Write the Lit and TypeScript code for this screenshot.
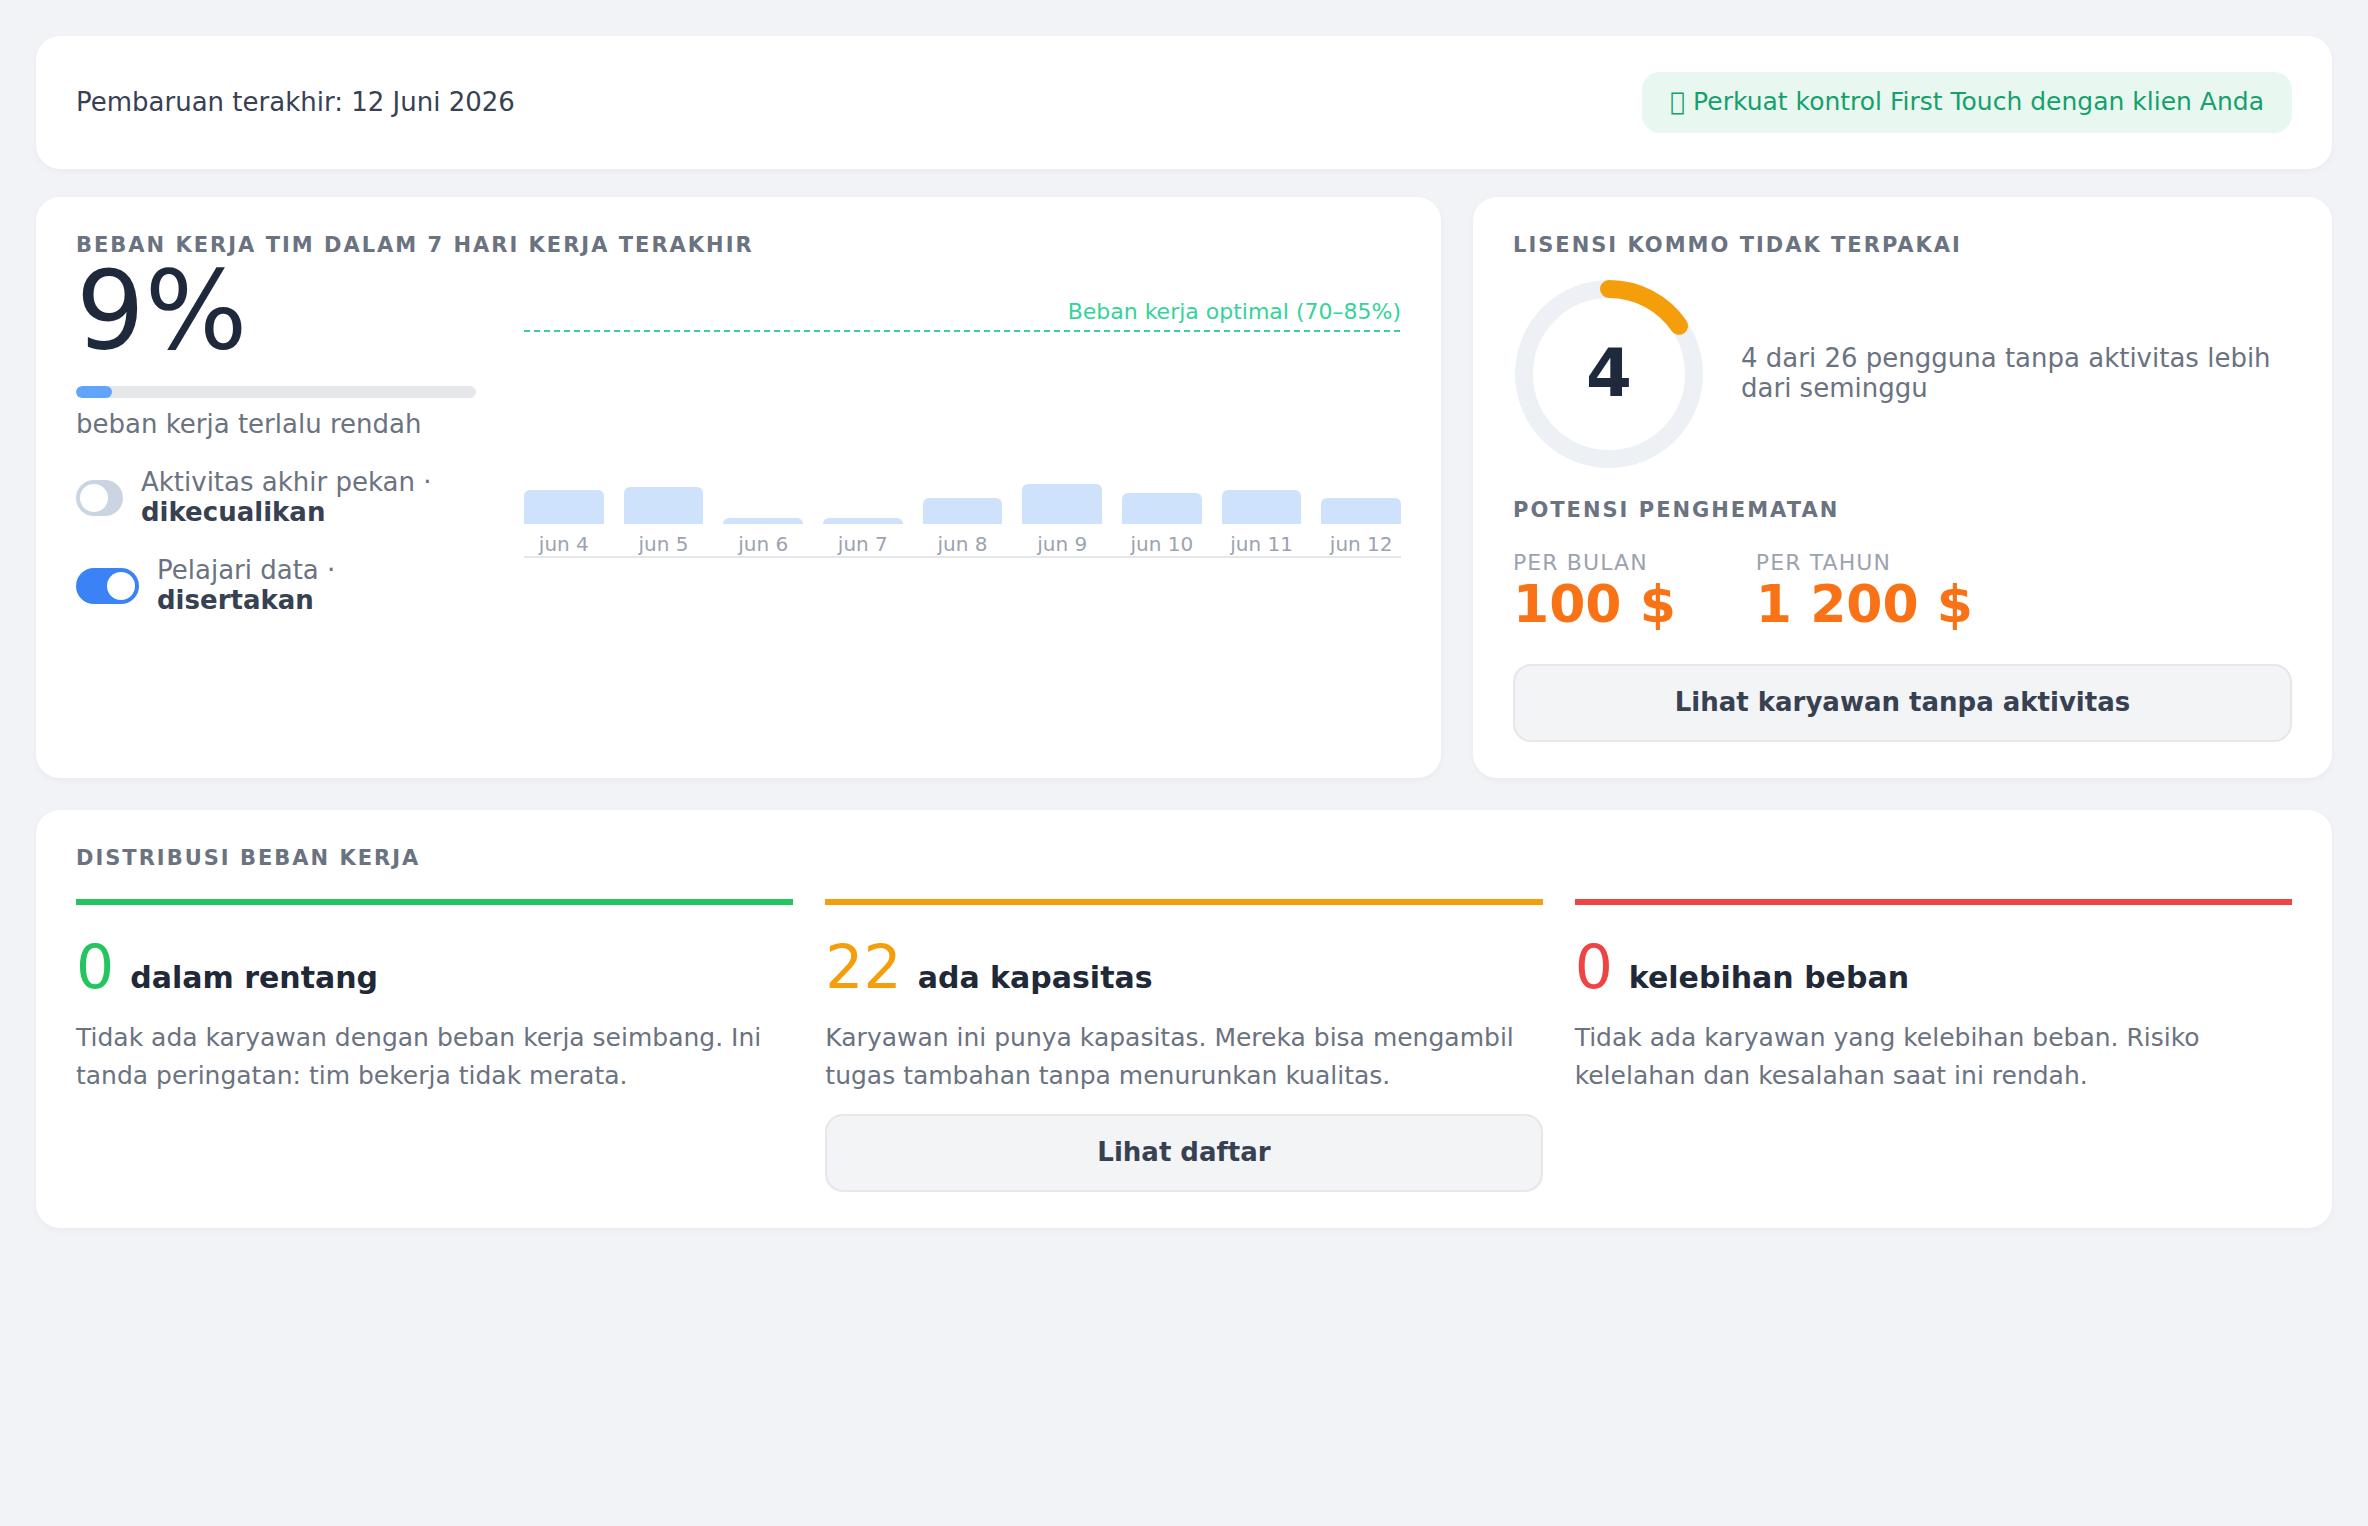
import {LitElement, html, css} from 'lit';
import {customElement} from 'lit/decorators.js';

const BARS = [
  {label: 'jun 4', h: 34},
  {label: 'jun 5', h: 37},
  {label: 'jun 6', h: 6},
  {label: 'jun 7', h: 6},
  {label: 'jun 8', h: 26},
  {label: 'jun 9', h: 40},
  {label: 'jun 10', h: 31},
  {label: 'jun 11', h: 34},
  {label: 'jun 12', h: 26},
];

const BUCKETS = [
  {
    n: '0',
    label: 'dalam rentang',
    color: '#22c55e',
    text: 'Tidak ada karyawan dengan beban kerja seimbang. Ini tanda peringatan: tim bekerja tidak merata.',
    action: '',
  },
  {
    n: '22',
    label: 'ada kapasitas',
    color: '#f59e0b',
    text: 'Karyawan ini punya kapasitas. Mereka bisa mengambil tugas tambahan tanpa menurunkan kualitas.',
    action: 'Lihat daftar',
  },
  {
    n: '0',
    label: 'kelebihan beban',
    color: '#ef4444',
    text: 'Tidak ada karyawan yang kelebihan beban. Risiko kelelahan dan kesalahan saat ini rendah.',
    action: '',
  },
];

const RADIUS = 85;
const CIRC = 2 * Math.PI * RADIUS;

@customElement('app-root')
export class AppRoot extends LitElement {
  static override styles = css`
    :host {
      display: block;
      min-height: 100vh;
      box-sizing: border-box;
      padding: 36px;
      background: #f1f3f7;
      font-family: 'DejaVu Sans', sans-serif;
      color: #1f2937;
    }

    * {
      box-sizing: border-box;
    }

    .card {
      background: #fff;
      border-radius: 24px;
      box-shadow: 0 2px 6px rgba(0, 0, 0, 0.04);
    }

    .header {
      display: flex;
      align-items: center;
      justify-content: space-between;
      height: 133px;
      padding: 0 40px;
      margin-bottom: 28px;
    }

    .updated {
      font-size: 26px;
      line-height: 30px;
      padding-bottom: 2px;
      color: #374151;
    }

    .badge {
      height: 61px;
      padding: 0 28px;
      border-radius: 18px;
      background: #e8f8f1;
      color: #16a06b;
      font-size: 25px;
      line-height: 60px;
    }

    .row {
      display: grid;
      grid-template-columns: 1405fr 859fr;
      gap: 32px;
      margin-bottom: 32px;
    }

    .panel {
      padding: 36px 40px;
    }

    .title {
      font-size: 21px;
      line-height: 24px;
      font-weight: 700;
      letter-spacing: 2px;
      color: #6b7280;
      text-transform: uppercase;
    }

    .load {
      display: flex;
      gap: 48px;
    }

    .summary {
      flex: 0 0 400px;
    }

    .percent {
      font-size: 108px;
      line-height: 108px;
      color: #1e293b;
      margin-bottom: 21px;
    }

    .track {
      height: 12px;
      border-radius: 6px;
      background: #e5e7eb;
      overflow: hidden;
    }

    .fill {
      height: 100%;
      border-radius: 6px;
      background: #60a5fa;
    }

    .hint {
      font-size: 26px;
      line-height: 30px;
      color: #6b7280;
      margin: 11px 0 28px;
    }

    .option {
      display: flex;
      align-items: center;
      gap: 18px;
      margin-bottom: 28px;
      font-size: 26px;
      line-height: 30px;
      color: #6b7280;
    }

    .option b {
      display: block;
      color: #374151;
    }

    .toggle {
      flex: none;
      display: flex;
      align-items: center;
      height: 36px;
      margin-top: 2px;
      padding: 0 4px;
      border-radius: 18px;
      background: #cbd5e1;
    }

    .toggle.off {
      width: 47px;
    }

    .toggle.on {
      width: 63px;
      justify-content: flex-end;
      background: #3b82f6;
    }

    .knob {
      width: 28px;
      height: 28px;
      border-radius: 50%;
      background: #fff;
    }

    .chart {
      flex: 1;
      min-width: 0;
    }

    .target {
      margin-top: 41px;
      padding-bottom: 4px;
      text-align: right;
      font-size: 22px;
      line-height: 28px;
      color: #34d399;
    }

    .dashes {
      height: 2px;
      background: repeating-linear-gradient(90deg, #34d399 0 6px, transparent 6px 10px);
    }

    .bars {
      display: flex;
      gap: 20px;
      border-bottom: 2px solid #e5e7eb;
    }

    .bar-col {
      flex: 1;
      min-width: 0;
      text-align: center;
    }

    .bar-slot {
      height: 192px;
      display: flex;
      align-items: flex-end;
    }

    .bar {
      width: 100%;
      border-radius: 6px 6px 0 0;
      background: #cfe2fb;
    }

    .bar-label {
      font-size: 20px;
      line-height: 24px;
      padding-top: 8px;
      color: #9ca3af;
    }

    .licence {
      display: flex;
      align-items: center;
      gap: 36px;
      margin: 21px 0 28px;
    }

    .donut {
      position: relative;
      flex: none;
      width: 192px;
      height: 192px;
    }

    .donut svg {
      display: block;
    }

    .donut-value {
      position: absolute;
      inset: 0;
      display: flex;
      align-items: center;
      justify-content: center;
      padding-bottom: 2px;
      font-size: 66px;
      font-weight: 700;
      color: #1e293b;
    }

    .licence-text {
      padding-bottom: 2px;
      font-size: 26px;
      line-height: 30px;
      color: #6b7280;
    }

    .savings {
      display: flex;
      gap: 80px;
      margin: 28px 0 32px;
    }

    .period {
      font-size: 22px;
      line-height: 26px;
      letter-spacing: 1.1px;
      color: #9ca3af;
      text-transform: uppercase;
    }

    .amount {
      margin-top: 1px;
      font-size: 52px;
      line-height: 55px;
      font-weight: 700;
      color: #f97316;
    }

    .button {
      display: block;
      width: 100%;
      height: 78px;
      padding-bottom: 3px;
      border: 2px solid #e5e7eb;
      border-radius: 18px;
      background: #f3f4f6;
      color: #374151;
      font: 700 26px 'DejaVu Sans', sans-serif;
    }

    .buckets {
      display: grid;
      grid-template-columns: repeat(3, 1fr);
      gap: 32px;
      margin-top: 29px;
    }

    .bucket {
      border-top: 6px solid;
      padding-top: 25px;
    }

    .head {
      display: flex;
      align-items: baseline;
      gap: 16px;
      font-size: 30px;
      font-weight: 700;
      color: #1f2937;
    }

    .count {
      font-size: 60px;
      line-height: 74px;
      font-weight: 400;
    }

    .desc {
      margin: 15px 0 0;
      font-size: 25px;
      line-height: 38px;
      color: #6b7280;
    }

    .bucket .button {
      margin-top: 19px;
    }
  `;

  override render() {
    return html`
      <div class="card header">
        <div class="updated">Pembaruan terakhir: 12 Juni 2026</div>
        <div class="badge">\u{E123} Perkuat kontrol First Touch dengan klien Anda</div>
      </div>

      <div class="row">
        <section class="card panel">
          <div class="title">Beban kerja tim dalam 7 hari kerja terakhir</div>
          <div class="load">
            <div class="summary">
              <div class="percent">9%</div>
              <div class="track"><div class="fill" style="width: 9%"></div></div>
              <div class="hint">beban kerja terlalu rendah</div>
              <div class="option">
                <span class="toggle off"><span class="knob"></span></span>
                <span>Aktivitas akhir pekan · <b>dikecualikan</b></span>
              </div>
              <div class="option">
                <span class="toggle on"><span class="knob"></span></span>
                <span>Pelajari data · <b>disertakan</b></span>
              </div>
            </div>
            <div class="chart">
              <div class="target">Beban kerja optimal (70–85%)</div>
              <div class="dashes"></div>
              <div class="bars">
                ${BARS.map(
                  (b) => html`
                    <div class="bar-col">
                      <div class="bar-slot"><div class="bar" style="height: ${b.h}px"></div></div>
                      <div class="bar-label">${b.label}</div>
                    </div>
                  `
                )}
              </div>
            </div>
          </div>
        </section>

        <section class="card panel">
          <div class="title">Lisensi Kommo tidak terpakai</div>
          <div class="licence">
            <div class="donut">
              <svg width="192" height="192" viewBox="0 0 192 192">
                <circle cx="96" cy="96" r="${RADIUS}" fill="none" stroke="#edf0f5" stroke-width="18"></circle>
                <circle
                  cx="96"
                  cy="96"
                  r="${RADIUS}"
                  fill="none"
                  stroke="#f59e0b"
                  stroke-width="18"
                  stroke-linecap="round"
                  stroke-dasharray="${(CIRC * 4) / 26} ${CIRC}"
                  transform="rotate(-90 96 96)"
                ></circle>
              </svg>
              <div class="donut-value">4</div>
            </div>
            <div class="licence-text">4 dari 26 pengguna tanpa aktivitas lebih dari seminggu</div>
          </div>
          <div class="title">Potensi penghematan</div>
          <div class="savings">
            <div>
              <div class="period">Per bulan</div>
              <div class="amount">100 $</div>
            </div>
            <div>
              <div class="period">Per tahun</div>
              <div class="amount">1 200 $</div>
            </div>
          </div>
          <button class="button">Lihat karyawan tanpa aktivitas</button>
        </section>
      </div>

      <section class="card panel">
        <div class="title">Distribusi beban kerja</div>
        <div class="buckets">
          ${BUCKETS.map(
            (b) => html`
              <div class="bucket" style="border-color: ${b.color}">
                <div class="head">
                  <span class="count" style="color: ${b.color}">${b.n}</span>
                  <span>${b.label}</span>
                </div>
                <p class="desc">${b.text}</p>
                ${b.action ? html`<button class="button">${b.action}</button>` : ''}
              </div>
            `
          )}
        </div>
      </section>
    `;
  }
}
